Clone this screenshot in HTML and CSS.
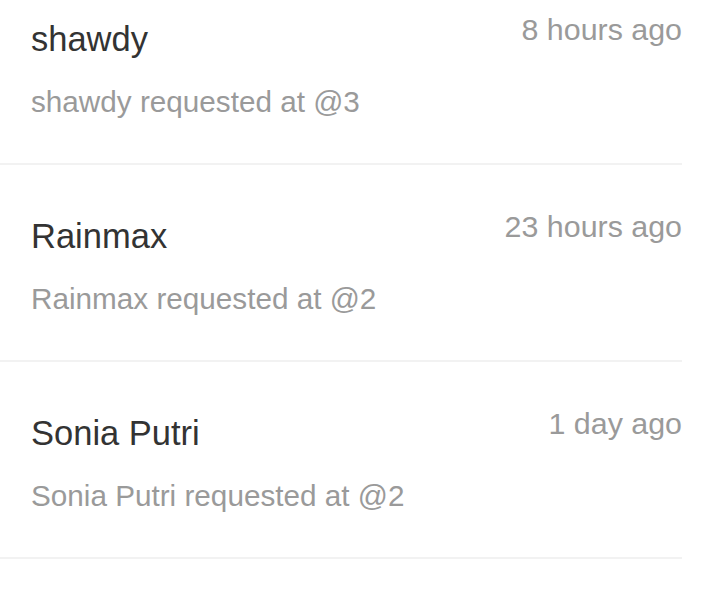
FILE: index.html
```html
<!DOCTYPE html>
<html lang="en">
<head>
    <meta charset="UTF-8">
    <meta name="viewport" content="width=device-width, initial-scale=1.0">
    <title>Requests</title>
    <link rel="stylesheet" href="styles.css">
</head>
<body>
    <ul class="requests">
        <li class="request">
            <div class="request-head">
                <span class="request-name">shawdy</span>
                <span class="request-time">8 hours ago</span>
            </div>
            <p class="request-text">shawdy requested at @3</p>
        </li>
        <li class="request">
            <div class="request-head">
                <span class="request-name">Rainmax</span>
                <span class="request-time">23 hours ago</span>
            </div>
            <p class="request-text">Rainmax requested at @2</p>
        </li>
        <li class="request">
            <div class="request-head">
                <span class="request-name">Sonia Putri</span>
                <span class="request-time">1 day ago</span>
            </div>
            <p class="request-text">Sonia Putri requested at @2</p>
        </li>
    </ul>
</body>
</html>
```

FILE: styles.css
```css
body, html {
    margin: 0;
    padding: 0;
    background-color: #fff;
    font-family: "Liberation Sans", Arial, sans-serif;
    overflow: hidden;
}

.requests {
    list-style: none;
    margin: -32px 0 0 0;
    padding: 0;
    width: 682px;
}

.request {
    padding: 43px 0 43px 31px;
    border-bottom: 2px solid #f2f2f2;
}

.request-head {
    display: flex;
    justify-content: space-between;
    align-items: flex-start;
}

.request-name {
    margin-top: 8px;
    font-size: 34.5px;
    line-height: 40px;
    color: #333;
}

.request-time {
    font-size: 30.4px;
    line-height: 36px;
    color: #9a9a9a;
}

.request-text {
    margin: 25px 0 0 0;
    font-size: 29.7px;
    line-height: 36px;
    color: #9a9a9a;
}
```
